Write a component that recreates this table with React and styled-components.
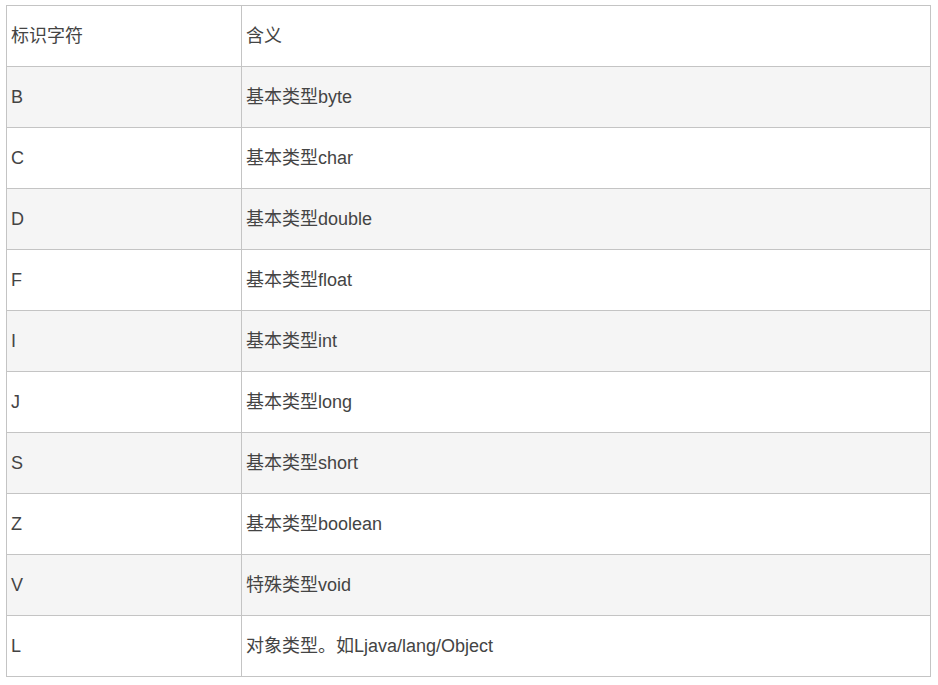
import React from "react";
import styled, { createGlobalStyle } from "styled-components";

const Global = createGlobalStyle`
  html, body { margin: 0; padding: 0; background: #fff; }
  body { font-family: "Liberation Sans", "Noto Sans CJK SC", sans-serif; }
`;

const Page = styled.div`
  padding: 5px 6px;
`;

const Table = styled.table`
  width: 925px;
  border-collapse: collapse;
  table-layout: fixed;
  color: #444;
  font-size: 18px;
  line-height: 20px;
  font-family: "Liberation Sans", "Noto Sans CJK SC", sans-serif;
`;

const Row = styled.tr`
  background: ${(p) => (p.$striped ? "#f5f5f5" : "#fff")};
`;

const Cell = styled.td`
  border: 1px solid #c4c4c4;
  height: 61px;
  padding: 0 4px;
  box-sizing: border-box;
  vertical-align: middle;
  text-align: left;
  font-weight: normal;
`;

const rows = [
  ["标识字符", "含义"],
  ["B", "基本类型byte"],
  ["C", "基本类型char"],
  ["D", "基本类型double"],
  ["F", "基本类型float"],
  ["I", "基本类型int"],
  ["J", "基本类型long"],
  ["S", "基本类型short"],
  ["Z", "基本类型boolean"],
  ["V", "特殊类型void"],
  ["L", "对象类型。如Ljava/lang/Object"],
];

export default function App() {
  return (
    <>
      <Global />
      <Page>
        <Table>
          <colgroup>
            <col style={{ width: 235 }} />
            <col />
          </colgroup>
          <tbody>
            {rows.map(([a, b], i) => (
              <Row key={i} $striped={i % 2 === 1}>
                <Cell>{a}</Cell>
                <Cell>{b}</Cell>
              </Row>
            ))}
          </tbody>
        </Table>
      </Page>
    </>
  );
}
